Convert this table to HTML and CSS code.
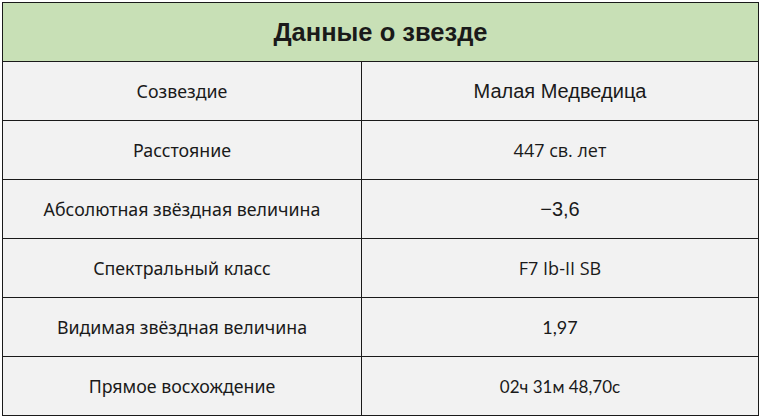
FILE: index.html
```html
<!DOCTYPE html>
<html lang="ru">
<head>
<meta charset="utf-8">
<link rel="stylesheet" href="styles.css">
</head>
<body>
<table class="star">
  <colgroup><col class="c-key"><col class="c-val"></colgroup>
  <thead>
    <tr><th colspan="2" class="title">Данные о звезде</th></tr>
  </thead>
  <tbody>
    <tr><td class="k">Созвездие</td><td class="v f-lib f-big">Малая Медведица</td></tr>
    <tr><td class="k">Расстояние</td><td class="v f-open">447 св. лет</td></tr>
    <tr><td class="k">Абсолютная звёздная величина</td><td class="v f-lib f-minus">−3,6</td></tr>
    <tr><td class="k">Спектральный класс</td><td class="v f-open f-spec">F7 Ib-II SB</td></tr>
    <tr><td class="k">Видимая звёздная величина</td><td class="v f-lato">1,97</td></tr>
    <tr><td class="k">Прямое восхождение</td><td class="v f-lato f-small">02ч 31м 48,70с</td></tr>
  </tbody>
</table>
</body>
</html>
```
FILE: styles.css
```css
html, body {
  margin: 0;
  padding: 0;
  background: #ffffff;
}
body {
  padding: 2px;
}
.star {
  border-collapse: collapse;
  width: 757px;
  table-layout: fixed;
  border: 1px solid #1a1a1a;
}
.c-key {
  width: 359px;
}
.star th, .star td {
  border: 1px solid #1a1a1a;
  height: 58px;
  padding: 0;
  text-align: center;
  vertical-align: middle;
  color: #1a1a1a;
}
.title {
  background: #c8e0b6;
  font-family: "Liberation Sans", Arial, sans-serif;
  font-weight: bold;
  font-size: 25.5px;
  color: #1d2e1d;
}
.k {
  background: #f2f2f2;
  font-family: "Noto Sans", "Open Sans", sans-serif;
  font-size: 17.8px;
}
.v {
  background: #f2f2f2;
}
.f-open {
  font-family: "Open Sans", sans-serif;
  font-size: 18px;
}
.f-spec {
  padding-left: 6px;
}
.f-lib {
  font-family: "Liberation Sans", Arial, sans-serif;
  font-size: 19px;
}
.f-big {
  font-size: 20px;
}
.f-minus {
  font-size: 20px;
  color: #333333;
}
.f-lato {
  font-family: Lato, sans-serif;
  font-size: 18px;
}
.f-small {
  font-size: 17px;
}
```
